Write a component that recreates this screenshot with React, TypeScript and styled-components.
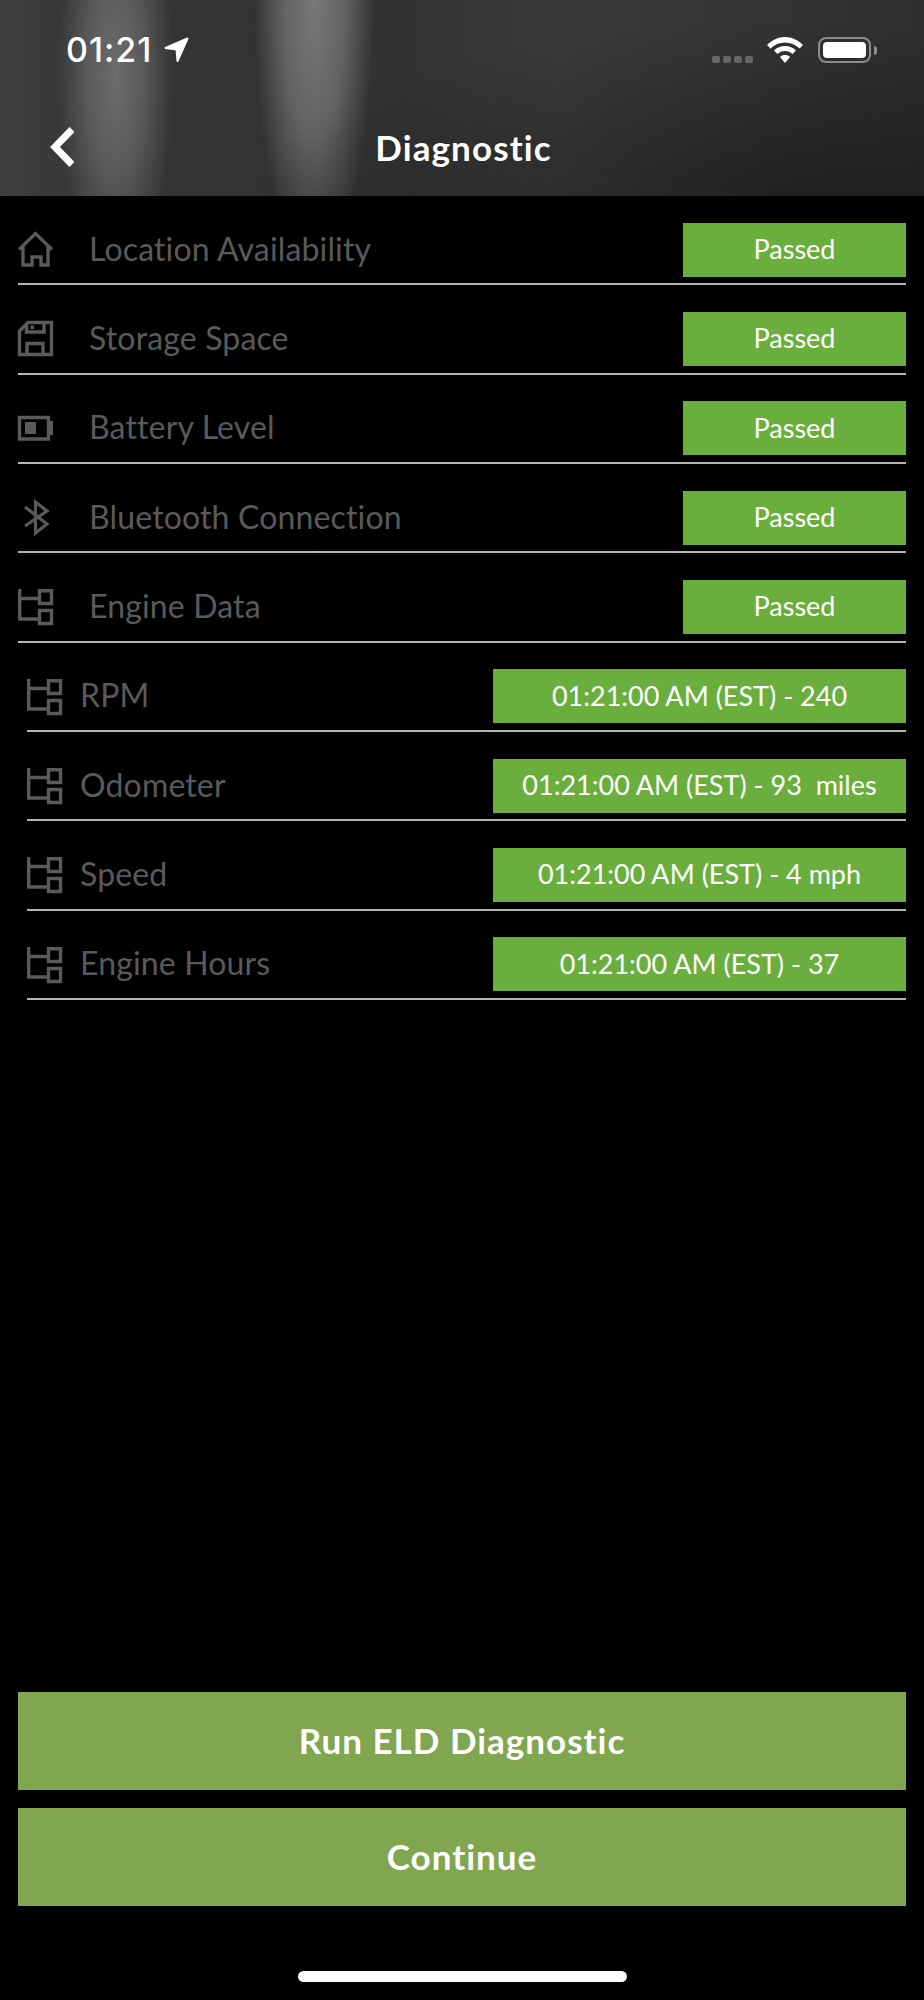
import styled, { createGlobalStyle } from "styled-components";

const GlobalStyle = createGlobalStyle`
  html, body {
    margin: 0;
    padding: 0;
    background: #000;
  }
`;

const Page = styled.div`
  width: 924px;
  height: 2000px;
  display: flex;
  flex-direction: column;
  background: #000;
  font-family: Lato, "Open Sans", sans-serif;
  font-variant-ligatures: none;
  overflow: hidden;
`;

const Header = styled.header`
  height: 196px;
  flex: none;
  box-sizing: border-box;
  padding: 37px 47px 0 50px;
  color: #fff;
  background:
    radial-gradient(ellipse 560px 190px at 800px 210px, rgba(0, 0, 0, 0.38) 0, rgba(0, 0, 0, 0) 100%),
    radial-gradient(ellipse 58px 210px at 116px 75px, rgba(255, 255, 255, 0.27) 0, rgba(255, 255, 255, 0.19) 45%, rgba(255, 255, 255, 0) 100%),
    radial-gradient(ellipse 60px 270px at 314px 0, rgba(255, 255, 255, 0.34) 0, rgba(255, 255, 255, 0.24) 50%, rgba(255, 255, 255, 0) 100%),
    linear-gradient(90deg, #3f3f3f 0, #383838 60px, #333 180px, #323232 400px, #3a3a3a 560px, #2e2e2e 924px);
`;

const StatusBar = styled.div`
  display: flex;
  align-items: flex-start;
  height: 26px;
`;

const Clock = styled.div`
  margin-left: 16px;
  font-family: Inter, sans-serif;
  font-size: 34px;
  line-height: 26px;
  font-weight: 500;
  letter-spacing: 1px;
`;

const LocationArrow = styled.svg`
  margin-left: 12px;
`;

const StatusRight = styled.div`
  margin-left: auto;
  display: flex;
  align-items: flex-start;
`;

const SignalDots = styled.div`
  display: flex;
  gap: 3px;
  margin-top: 19px;
  margin-right: 14px;
`;

const SignalDot = styled.span`
  width: 8px;
  height: 7px;
  border-radius: 2px;
  background: #666;
`;

const BatteryBody = styled.div`
  width: 53px;
  height: 26px;
  box-sizing: border-box;
  margin-left: 15px;
  padding: 3px;
  border: 2px solid #8c8c8c;
  border-radius: 8px;
`;

const BatteryFill = styled.div`
  height: 100%;
  background: #fff;
  border-radius: 4px;
`;

const BatteryNub = styled.div`
  width: 3px;
  height: 9px;
  margin: 9px 0 0 3px;
  border-radius: 0 3px 3px 0;
  background: #8c8c8c;
`;

const NavBar = styled.div`
  display: grid;
  grid-template-columns: 1fr auto 1fr;
  align-items: center;
  margin-top: 60px;
  height: 48px;
`;

const Title = styled.h1`
  margin: 0;
  font-size: 35px;
  line-height: 48px;
  font-weight: 700;
  letter-spacing: 1.1px;
`;

const List = styled.div`
  display: flex;
  flex-direction: column;
  padding: 0 18px;
`;

const Row = styled.div<{ $sub?: boolean }>`
  height: 89.33px;
  box-sizing: border-box;
  display: flex;
  align-items: center;
  margin-left: ${(p) => (p.$sub ? "9px" : "0")};
  padding-top: 20px;
  border-bottom: 2px solid #b4b4b4;
`;

const IconBox = styled.div<{ $sub?: boolean }>`
  width: 35px;
  height: 35px;
  flex: none;
  margin-right: ${(p) => (p.$sub ? "18px" : "36px")};
  color: #5a5a5a;
  svg {
    display: block;
    overflow: visible;
  }
`;

const Label = styled.div`
  padding-bottom: 2px;
  color: #5a5a5a;
  font-size: 32px;
  line-height: 40px;
  font-weight: 400;
  letter-spacing: 0.15px;
`;

const Status = styled.div<{ $wide?: boolean }>`
  margin-left: auto;
  width: ${(p) => (p.$wide ? "413px" : "223px")};
  height: 54px;
  box-sizing: border-box;
  padding-bottom: 2px;
  display: flex;
  align-items: center;
  justify-content: center;
  background: #6aaf3d;
  color: #fff;
  font-size: 27px;
  white-space: pre;
`;

const Footer = styled.div`
  margin-top: auto;
  display: flex;
  flex-direction: column;
  align-items: center;
`;

const ActionButton = styled.button`
  width: 888px;
  height: 98px;
  margin-bottom: 18px;
  border: none;
  padding: 0 0 3px;
  background: #80a650;
  color: #fff;
  font-family: inherit;
  font-variant-ligatures: none;
  font-size: 35px;
  font-weight: 700;
  letter-spacing: 1px;
`;

const HomeIndicator = styled.div`
  width: 329px;
  height: 11px;
  margin-top: 47px;
  margin-bottom: 18px;
  border-radius: 6px;
  background: #fff;
`;

const HomeIcon = () => (
  <svg width="35" height="35" viewBox="0 0 35 35" fill="none" stroke="currentColor" strokeWidth="3.4">
    <path d="M1 17.500 17.500 1.500 34 17.500M5 14.500V33H14V25H23V33H30V14.500" />
  </svg>
);

const FloppyIcon = () => (
  <svg width="35" height="35" viewBox="0 0 35 35" fill="none" stroke="currentColor" strokeWidth="3.4">
    <path d="M10 1.500H33.500V33.500H1.500V10Z" />
    <path d="M8.500 3V11H26V3M9 33V22.500H25V33" />
    <path d="M12.500 4.500H16V8H12.500Z" fill="currentColor" stroke="none" />
  </svg>
);

const BatteryIcon = () => (
  <svg width="35" height="35" viewBox="0 0 35 35" fill="none" stroke="currentColor" strokeWidth="3.4">
    <path d="M1.500 6.500H30.500V28H1.500Z" />
    <path d="M7 11H18V23H7Z" fill="currentColor" stroke="none" />
    <path d="M32 10H35V24H32Z" fill="currentColor" stroke="none" />
  </svg>
);

const BluetoothIcon = () => (
  <svg width="35" height="35" viewBox="0 0 35 35" fill="none" stroke="currentColor" strokeWidth="3.2">
    <path d="M7 7 29 24 17.500 33V2L29 11 7 26" />
  </svg>
);

const TreeIcon = () => (
  <svg width="35" height="35" viewBox="0 0 35 35" fill="none" stroke="currentColor" strokeWidth="3.4">
    <path d="M1.700 0V30H20M1.700 9.500H20" />
    <path d="M21.500 1.700H33.500V14.500H21.500ZM21.500 21.500H33.500V34.500H21.500Z" />
  </svg>
);

const rows = [
  { label: "Location Availability", value: "Passed", icon: <HomeIcon /> },
  { label: "Storage Space", value: "Passed", icon: <FloppyIcon /> },
  { label: "Battery Level", value: "Passed", icon: <BatteryIcon /> },
  { label: "Bluetooth Connection", value: "Passed", icon: <BluetoothIcon /> },
  { label: "Engine Data", value: "Passed", icon: <TreeIcon /> },
  { label: "RPM", value: "01:21:00 AM (EST) - 240", icon: <TreeIcon />, sub: true },
  { label: "Odometer", value: "01:21:00 AM (EST) - 93  miles", icon: <TreeIcon />, sub: true },
  { label: "Speed", value: "01:21:00 AM (EST) - 4 mph", icon: <TreeIcon />, sub: true },
  { label: "Engine Hours", value: "01:21:00 AM (EST) - 37", icon: <TreeIcon />, sub: true },
];

export default function App() {
  return (
    <Page>
      <GlobalStyle />
      <Header>
        <StatusBar>
          <Clock>01:21</Clock>
          <LocationArrow width="25" height="26" viewBox="0 0 25 26">
            <path d="M23.500 1.500 13.500 24 12.500 12.500 1.500 11Z" fill="#fff" stroke="#fff" strokeWidth="2" strokeLinejoin="round" />
          </LocationArrow>
          <StatusRight>
            <SignalDots>
              <SignalDot />
              <SignalDot />
              <SignalDot />
              <SignalDot />
            </SignalDots>
            <svg width="36" height="26" viewBox="0 0 36 26">
              <path d="M18 0C25 0 31 3 36 8L32.500 11.500C28.500 7.500 23.500 5.500 18 5.500S7.500 7.500 3.500 11.500L0 8C5 3 11 0 18 0Z" fill="#fff" />
              <path d="M18 9C22.500 9 26 10.500 29 13.500L25.500 17C23.500 15 21 14 18 14S12.500 15 10.500 17L7 13.500C10 10.500 13.500 9 18 9Z" fill="#fff" />
              <path d="M18 18C20 18 21.500 18.500 23 20L18 26 13 20C14.500 18.500 16 18 18 18Z" fill="#fff" />
            </svg>
            <BatteryBody>
              <BatteryFill />
            </BatteryBody>
            <BatteryNub />
          </StatusRight>
        </StatusBar>
        <NavBar>
          <svg width="24" height="40" viewBox="0 0 24 40" fill="none" stroke="#fff" strokeWidth="7">
            <path d="M22 2.500 5 20 22 37.500" />
          </svg>
          <Title>Diagnostic</Title>
        </NavBar>
      </Header>
      <List>
        {rows.map((r) => (
          <Row key={r.label} $sub={r.sub}>
            <IconBox $sub={r.sub}>{r.icon}</IconBox>
            <Label>{r.label}</Label>
            <Status $wide={r.sub}>{r.value}</Status>
          </Row>
        ))}
      </List>
      <Footer>
        <ActionButton>Run ELD Diagnostic</ActionButton>
        <ActionButton>Continue</ActionButton>
        <HomeIndicator />
      </Footer>
    </Page>
  );
}
